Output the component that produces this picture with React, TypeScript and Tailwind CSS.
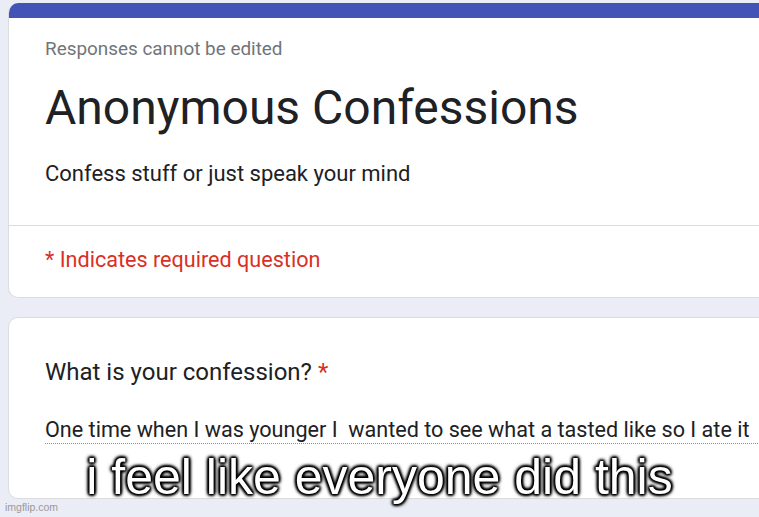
export default function App() {
  const roboto = { fontFamily: "Roboto, 'Liberation Sans', sans-serif" };

  return (
    <div
      className="relative w-full h-[517px] overflow-hidden bg-[#eaecf6] pl-[8px] pt-[3px]"
      style={roboto}
    >
      {/* header card */}
      <div className="mr-[-40px] rounded-[10px] overflow-hidden bg-white border border-[#dadce0] border-t-0">
        <div className="h-[15px] bg-[#4153b5]"></div>
        <div className="pl-[36px] pt-[19px]">
          <div className="text-[18.9px] leading-[24px] text-[#70757a]">
            Responses cannot be edited
          </div>
          <div className="mt-[19px] text-[48px] leading-[56px] text-[#202124]">
            Anonymous Confessions
          </div>
          <div className="mt-[24px] text-[22px] leading-[28px] text-[#202124]">
            Confess stuff or just speak your mind
          </div>
        </div>
        <div className="mt-[37px] h-px bg-[#dadce0]"></div>
        <div className="pl-[36px] pt-[21px] pb-[24px] text-[21.6px] leading-[26px] text-[#d93025]">
          * Indicates required question
        </div>
      </div>

      {/* question card */}
      <div className="mt-[19px] mr-[-40px] h-[182px] rounded-[10px] bg-white border border-[#dadce0] pl-[36px] pt-[40px]">
        <div className="text-[24px] leading-[28px] text-[#202124]">
          What is your confession? <span className="text-[#d93025]">*</span>
        </div>
        <div className="mt-[31px] pb-0 border-b border-dotted border-[#8a8d91] text-[21.6px] leading-[26px] text-[#202124] whitespace-pre">
          {"One time when I was younger I  wanted to see what a tasted like so I ate it"}
        </div>
      </div>

      {/* meme caption */}
      <div
        className="absolute left-0 right-0 top-[449px] text-center text-white text-[50px] leading-[56px] whitespace-nowrap [text-shadow:0_0_2px_#000,0_0_3px_#000,0_0_4px_#000,0_0_5px_#000,1px_1px_3px_#000,-1px_-1px_3px_#000,1px_-1px_3px_#000,-1px_1px_3px_#000]"
        style={{ fontFamily: "'Liberation Sans', Arial, sans-serif" }}
      >
        i feel like everyone did this
      </div>

      {/* watermark */}
      <div
        className="absolute left-[5px] bottom-[3px] text-[10.5px] leading-[13px] text-[#9a9a9a]"
        style={{ fontFamily: "'Liberation Sans', Arial, sans-serif" }}
      >
        imgflip.com
      </div>
    </div>
  );
}
